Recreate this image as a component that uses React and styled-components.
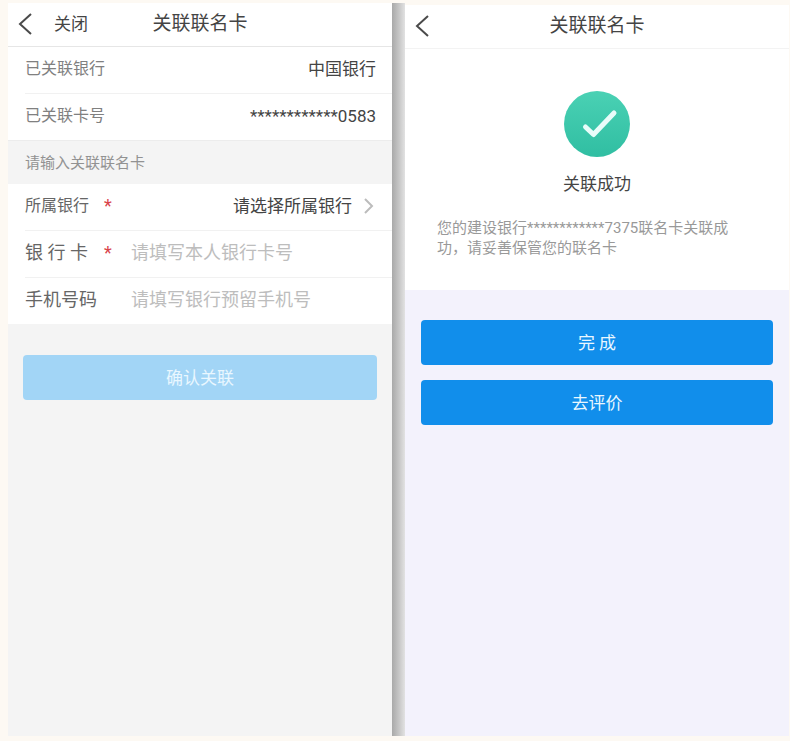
import React, { useState } from 'react';
import styled, { createGlobalStyle } from 'styled-components';

const GlobalStyle = createGlobalStyle`
  * {
    box-sizing: border-box;
  }
  body {
    margin: 0;
    background: #fdf9f3;
    color: #444;
    font-family: Roboto, 'Noto Sans CJK SC', sans-serif;
    font-size: 17px;
    line-height: 24px;
  }
  button,
  input,
  select {
    margin: 0;
    padding: 0;
    border: none;
    background: none;
    color: inherit;
    font: inherit;
  }
`;

const Page = styled.div`
  display: grid;
  grid-template-columns: 1fr 13px 1fr;
  min-height: 100vh;
  padding: 3px 1px 5px 8px;
`;

const Screen = styled.main`
  display: flex;
  flex-direction: column;
  min-width: 0;
  margin-top: ${(props) => props.$top || 0};
  background: ${(props) => props.$background};
`;

const Divider = styled.div`
  background: linear-gradient(to right, #a9a9a9, #c4c4c4 50%, #e2e2e2);
`;

const Header = styled.header`
  display: grid;
  grid-template-columns: 1fr auto 1fr;
  align-items: center;
  height: 44px;
  padding: 0 10px 2px;
  border-bottom: 1px solid ${(props) => props.$line};
  background: #fff;
`;

const HeaderLeft = styled.div`
  display: flex;
  align-items: center;
  gap: 22px;
`;

const IconButton = styled.button`
  display: flex;
  cursor: pointer;
`;

const TextButton = styled.button`
  cursor: pointer;
`;

const Title = styled.h1`
  margin: 0;
  font-size: 19px;
  font-weight: 400;
`;

const InfoList = styled.dl`
  margin: 0;
  background: #fff;
`;

const Row = styled.div`
  display: flex;
  align-items: center;
  height: 47px;
  margin-left: 17px;
  padding: 0 16px 2px 0;
  border-bottom: 1px solid #f1f1f1;
  &:last-child {
    height: 46px;
    border-bottom: none;
  }
`;

const InfoLabel = styled.dt`
  flex: 1;
  color: #808080;
  font-size: 16px;
`;

const InfoValue = styled.dd`
  margin: 0;
`;

const SectionTitle = styled.h2`
  margin: 0;
  padding: 10px 17px 9px;
  border-top: 1px solid #ececec;
  background: #f4f4f4;
  color: #929292;
  font-size: 15px;
  font-weight: 400;
`;

const Fields = styled.div`
  background: #fff;
`;

const FieldLabel = styled.label`
  display: flex;
  flex: 0 0 106px;
  color: #666;
  font-size: ${(props) => props.$size};
`;

const LabelText = styled.span`
  min-width: 79px;
`;

const Required = styled.span`
  color: #d9434b;
  font-size: 18px;
`;

const BankSelect = styled.select`
  flex: 1;
  min-width: 0;
  margin-right: 12px;
  appearance: none;
  text-align-last: right;
  cursor: pointer;
`;

const TextInput = styled.input`
  flex: 1;
  min-width: 0;
  font-size: 18px;
  &::placeholder {
    color: #bdbdbd;
    opacity: 1;
  }
`;

const Actions = styled.div`
  display: flex;
  flex-direction: column;
  gap: 15px;
  padding: ${(props) => props.$padding};
`;

const ActionButton = styled.button`
  height: 45px;
  border-radius: 4px;
  background: #118eeb;
  color: #e9f7ff;
  cursor: pointer;
  &:disabled {
    background: #a2d5f6;
    cursor: default;
  }
`;

const Result = styled.section`
  display: flex;
  flex-direction: column;
  align-items: center;
  padding: 42px 32px 32px;
  background: #fff;
`;

const ResultTitle = styled.h2`
  margin: 15px 0 22px;
  font-size: 17px;
  font-weight: 400;
`;

const ResultText = styled.p`
  align-self: stretch;
  max-width: 304px;
  margin: 0;
  color: #999;
  font-size: 15px;
  line-height: 20px;
  word-break: break-all;
`;

const BackIcon = () => (
  <svg width="14" height="24" viewBox="0 0 14 24" fill="none" stroke="#4a4a4a" strokeWidth="2">
    <path d="M13 2L2 12L13 22" />
  </svg>
);

const ArrowIcon = () => (
  <svg width="12" height="18" viewBox="0 0 12 18" fill="none" stroke="#bcbcbc" strokeWidth="2">
    <path d="M1 2L8 9L1 16" />
  </svg>
);

const SuccessIcon = () => (
  <svg width="66" height="66" viewBox="0 0 66 66" fill="none">
    <defs>
      <linearGradient id="success" x1="0" y1="0" x2="0" y2="1">
        <stop offset="0" stopColor="#4ad1b4" />
        <stop offset="1" stopColor="#30bea2" />
      </linearGradient>
    </defs>
    <circle cx="33" cy="33" r="33" fill="url(#success)" />
    <path
      d="M21.5 36L29.5 43.5L50 22"
      stroke="#e8fcf9"
      strokeWidth="5"
      strokeLinecap="round"
      strokeLinejoin="round"
    />
  </svg>
);

const LinkCard = () => {
  const [bank, setBank] = useState('');
  const [card, setCard] = useState('');
  const [phone, setPhone] = useState('');

  return (
    <Screen $background="#f4f4f4">
      <Header $line="#e6e6e6">
        <HeaderLeft>
          <IconButton type="button" aria-label="返回">
            <BackIcon />
          </IconButton>
          <TextButton type="button">关闭</TextButton>
        </HeaderLeft>
        <Title>关联联名卡</Title>
      </Header>
      <InfoList>
        <Row>
          <InfoLabel>已关联银行</InfoLabel>
          <InfoValue>中国银行</InfoValue>
        </Row>
        <Row>
          <InfoLabel>已关联卡号</InfoLabel>
          <InfoValue>************0583</InfoValue>
        </Row>
      </InfoList>
      <form onSubmit={(e) => e.preventDefault()}>
        <SectionTitle>请输入关联联名卡</SectionTitle>
        <Fields>
          <Row>
            <FieldLabel htmlFor="bank" $size="16px">
              <LabelText>所属银行</LabelText>
              <Required>*</Required>
            </FieldLabel>
            <BankSelect id="bank" value={bank} onChange={(e) => setBank(e.target.value)}>
              <option value="">请选择所属银行</option>
              <option value="boc">中国银行</option>
              <option value="ccb">建设银行</option>
            </BankSelect>
            <ArrowIcon />
          </Row>
          <Row>
            <FieldLabel htmlFor="card" $size="18px">
              <LabelText>银 行 卡</LabelText>
              <Required>*</Required>
            </FieldLabel>
            <TextInput
              id="card"
              placeholder="请填写本人银行卡号"
              value={card}
              onChange={(e) => setCard(e.target.value)}
            />
          </Row>
          <Row>
            <FieldLabel htmlFor="phone" $size="18px">
              <LabelText>手机号码</LabelText>
            </FieldLabel>
            <TextInput
              id="phone"
              type="tel"
              placeholder="请填写银行预留手机号"
              value={phone}
              onChange={(e) => setPhone(e.target.value)}
            />
          </Row>
        </Fields>
        <Actions $padding="31px 15px">
          <ActionButton type="submit" disabled={!bank || !card || !phone}>
            确认关联
          </ActionButton>
        </Actions>
      </form>
    </Screen>
  );
};

const LinkSuccess = () => (
  <Screen $background="#f3f2fc" $top="2px">
    <Header $line="#f3f3f3">
      <HeaderLeft>
        <IconButton type="button" aria-label="返回">
          <BackIcon />
        </IconButton>
      </HeaderLeft>
      <Title>关联联名卡</Title>
    </Header>
    <Result>
      <SuccessIcon />
      <ResultTitle>关联成功</ResultTitle>
      <ResultText>您的建设银行************7375联名卡关联成功，请妥善保管您的联名卡</ResultText>
    </Result>
    <Actions $padding="30px 16px">
      <ActionButton type="button">完 成</ActionButton>
      <ActionButton type="button">去评价</ActionButton>
    </Actions>
  </Screen>
);

export const App = () => {
  return (
    <>
      <GlobalStyle />
      <Page>
        <LinkCard />
        <Divider />
        <LinkSuccess />
      </Page>
    </>
  );
};
export default App;
